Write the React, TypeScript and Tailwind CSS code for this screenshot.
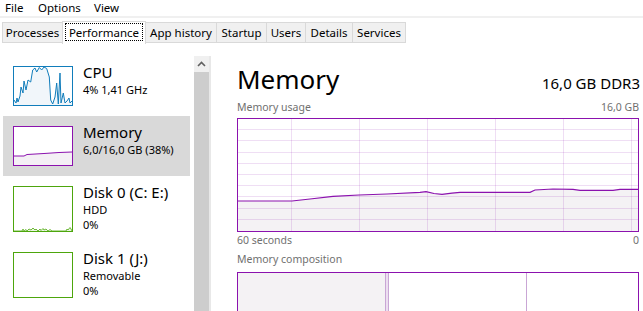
import React from "react";

function CpuThumb() {
  const pts =
    "0,33 2,36 3,31 4,35 6,29 7,20 9,26 10,14 12,23 14,13 16.7,15 18.7,3 21,1 22.7,5 25.3,0.5 27.7,3 30,0 32.7,1.5 35.3,10 36.7,33 38.7,37 41,30 42.7,16 44.3,37 46,6 47,36 49.3,26 51,36 53,34 55,31 56,36 58,34";
  return (
    <div className="w-[60px] h-[40px] border border-[#117dbb] bg-white shrink-0">
      <svg width="58" height="38" viewBox="0 0 58 38">
        <polygon points={`0,38 ${pts} 58,38`} fill="#f1f6fa" />
        <polyline points={pts} fill="none" stroke="#117dbb" strokeWidth="1" />
      </svg>
    </div>
  );
}

function MemThumb() {
  const pts = "0,29 10,29 13,27.5 30,26.5 45,25.5 58,25";
  return (
    <div className="w-[60px] h-[40px] border border-[#8b12ae] bg-white shrink-0">
      <svg width="58" height="38" viewBox="0 0 58 38">
        <polygon points={`0,38 ${pts} 58,38`} fill="#f4f0f5" />
        <polyline points={pts} fill="none" stroke="#8b12ae" strokeWidth="1" />
      </svg>
    </div>
  );
}

function DiskThumb({ noise }: { noise?: boolean }) {
  const pts =
    "0,44 8,44 9,42 10,44 12,42.5 13,44 15,42 17,43 19,41 21,43 22,42 24,44 26,42 27,43.5 29,41.5 30,43 32,42 34,44 36,42.5 38,44 52,44 53,42 54,43 56,40.5 57,42 58,44";
  return (
    <div className="w-[60px] h-[46px] border border-[#4da60c] bg-white shrink-0">
      <svg width="58" height="44" viewBox="0 0 58 44">
        {noise && (
          <>
            <polygon points={`0,44 ${pts} 58,44`} fill="#eaf5e2" />
            <polyline points={pts} fill="none" stroke="#6fb93a" strokeWidth="1" />
          </>
        )}
      </svg>
    </div>
  );
}

function SideItem({
  thumb,
  title,
  lines,
  selected,
  tall,
}: {
  thumb: React.ReactNode;
  title: string;
  lines: string[];
  selected?: boolean;
  tall?: boolean;
}) {
  return (
    <div
      className={`mx-[3px] w-[187px] flex pl-[10px] pt-[10px] ${tall ? "h-[66px]" : "h-[60px]"} ${
        selected ? "bg-[#d9d9d9]" : ""
      }`}
    >
      {thumb}
      <div className="ml-[10px] -mt-[3px] flex flex-col">
        <div className="text-[15px] leading-[19px] whitespace-nowrap">{title}</div>
        {lines.map((l) => (
          <div key={l} className="text-[11px] leading-[15px] whitespace-nowrap">
            {l}
          </div>
        ))}
      </div>
    </div>
  );
}

function Tab({ label, w, first }: { label: string; w: string; first?: boolean }) {
  return (
    <div
      className={`${w} h-[21px] mb-[1px] bg-[#f0f0f0] border-t border-b border-r border-[#d9d9d9] ${
        first ? "border-l border-r-0" : ""
      } flex justify-center pt-[3px] text-[11.5px] leading-[13px] whitespace-nowrap`}
    >
      {label}
    </div>
  );
}

function MemChart() {
  const line =
    "0,82 54,82 72,80 95,77.3 121,76 149,75 182,73.3 188,72.7 196,74.5 204,75.3 214,74.2 222,73.3 292,73.3 297,71 315,70 335,70.3 342,71.3 375,71.3 382,70.3 400,70.3";
  const vx = [53.5, 121.5, 189.5, 257.5, 325.5, 393.5];
  const hy = [1, 2, 3, 4, 5, 6, 7, 8, 9].map((k) => Math.round(k * 11.2) - 0.5);
  return (
    <div className="w-[402px] h-[114px] border border-[#8b12ae] bg-white">
      <svg width="400" height="112" viewBox="0 0 400 112" className="block">
        <polygon points={`${line} 400,112 0,112`} fill="#f4f2f4" />
        {vx.map((x) => (
          <line key={x} x1={x} x2={x} y1={0} y2={112} stroke="#8b12ae" strokeOpacity="0.14" />
        ))}
        {hy.map((y) => (
          <line key={y} x1={0} x2={400} y1={y} y2={y} stroke="#8b12ae" strokeOpacity="0.14" />
        ))}
        <polyline points={line} fill="none" stroke="#8b12ae" strokeWidth="1.2" />
      </svg>
    </div>
  );
}

export default function App() {
  return (
    <div className="w-[643px] h-[311px] bg-white overflow-hidden flex flex-col text-black font-['Noto_Sans',sans-serif]">
      {/* menu */}
      <div className="h-[16px] flex text-[11.5px] leading-[16px]">
        <span className="pl-[5px] w-[38px]">File</span>
        <span className="w-[56px]">Options</span>
        <span>View</span>
      </div>
      <div className="h-[2px] bg-[#f0f0f0]" />
      {/* tabs */}
      <div className="mt-[3px] h-[23px] flex items-end pl-[2px]">
        <Tab label="Processes" w="w-[60px]" first />
        <div className="w-[84px] h-[23px] bg-white border-l border-r border-t border-[#d9d9d9] px-[2px] pt-[1px]">
          <div className="h-[18px] border border-dotted border-black flex justify-center text-[11.5px] leading-[13px] pt-[2px] whitespace-nowrap">
            Performance
          </div>
        </div>
        <Tab label="App history" w="w-[71px]" />
        <Tab label="Startup" w="w-[50px]" />
        <Tab label="Users" w="w-[39px]" />
        <Tab label="Details" w="w-[47px]" />
        <Tab label="Services" w="w-[53px]" />
      </div>
      {/* body */}
      <div className="flex flex-1 min-h-0">
        <div className="w-[194px] pt-[12px] flex flex-col shrink-0">
          <SideItem thumb={<CpuThumb />} title="CPU" lines={["4%  1,41 GHz"]} />
          <SideItem thumb={<MemThumb />} title="Memory" lines={["6,0/16,0 GB (38%)"]} selected />
          <SideItem thumb={<DiskThumb noise />} title="Disk 0 (C: E:)" lines={["HDD", "0%"]} tall />
          <SideItem thumb={<DiskThumb />} title="Disk 1 (J:)" lines={["Removable", "0%"]} tall />
        </div>
        {/* scrollbar */}
        <div className="w-[15px] pt-[12px] flex flex-col shrink-0">
          <div className="h-[16px] bg-[#f0f0f0] flex items-center justify-center">
            <svg width="9" height="6" viewBox="0 0 9 6">
              <polyline points="1,5 4.5,1.5 8,5" fill="none" stroke="#606060" strokeWidth="1.6" />
            </svg>
          </div>
          <div className="flex-1 bg-[#cdcdcd]" />
        </div>
        <div className="w-[2px] pt-[12px] flex flex-col shrink-0">
          <div className="flex-1 bg-[#e8e8e8]" />
        </div>
        {/* right panel */}
        <div className="flex-1 pl-[26px] pr-[4px] pt-[19px] flex flex-col">
          <div className="flex items-baseline justify-between h-[32px]">
            <span className="text-[26px] leading-[32px]">Memory</span>
            <span className="text-[15px] leading-[18px] -mr-[1px]">16,0 GB DDR3</span>
          </div>
          <div className="mt-[6px] flex justify-between text-[10.5px] leading-[13px] text-[#707070]">
            <span>Memory usage</span>
            <span>16,0 GB</span>
          </div>
          <div className="mt-[4px]">
            <MemChart />
          </div>
          <div className="mt-[1.5px] flex justify-between text-[10.5px] leading-[13px] text-[#707070]">
            <span>60 seconds</span>
            <span>0</span>
          </div>
          <div className="mt-[6px] text-[10.5px] leading-[13px] text-[#707070]">Memory composition</div>
          <div className="mt-[6.5px] w-[402px] h-[60px] border border-[#8b12ae] flex shrink-0">
            <div className="w-[147px] bg-[#f4f2f4]" />
            <div className="w-[1px] bg-[#c9a6d5]" />
            <div className="w-[2px] bg-[#ecdff0]" />
            <div className="w-[1px] bg-[#c9a6d5]" />
            <div className="w-[137px] bg-white" />
            <div className="w-[1px] bg-[#c9a6d5]" />
            <div className="flex-1 bg-white" />
          </div>
        </div>
      </div>
    </div>
  );
}
